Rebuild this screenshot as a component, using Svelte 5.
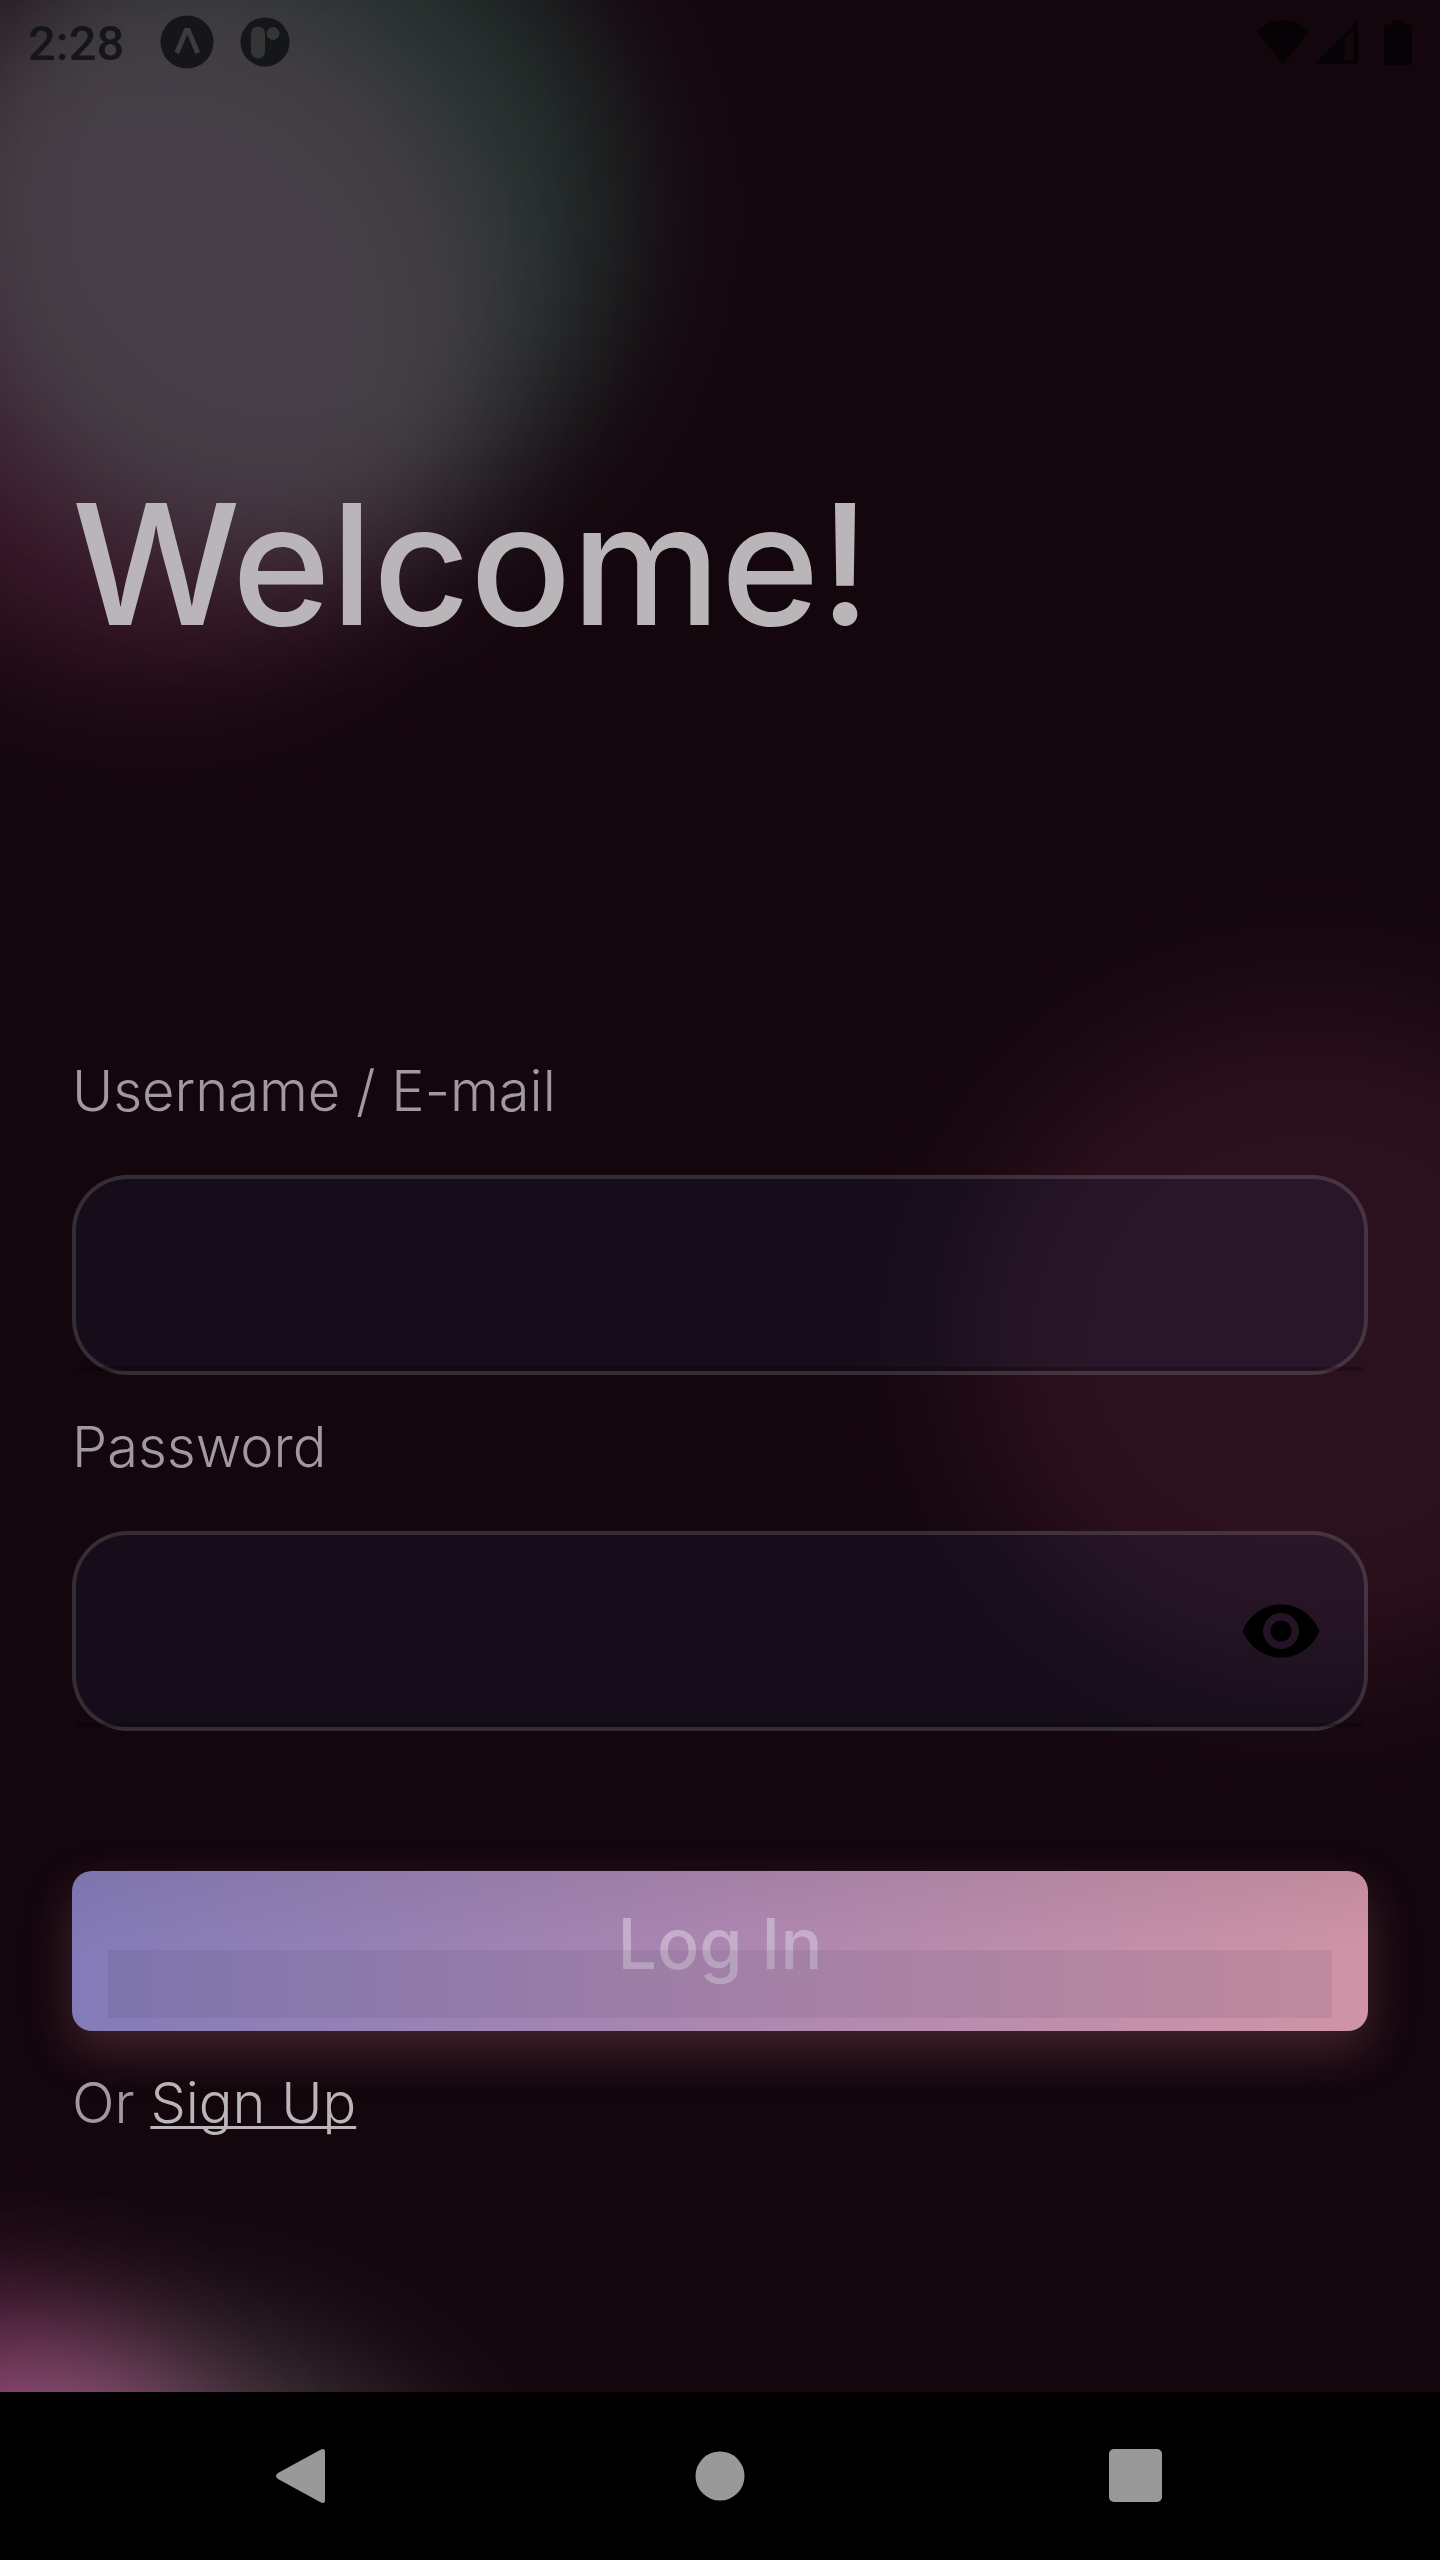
<script>
  let username = $state('');
  let password = $state('');
  let visible = $state(false);
</script>

<main class="screen">
  <div class="backdrop" aria-hidden="true">
    <div class="glow mint"></div>
    <div class="glow rose"></div>
    <div class="glow wine"></div>
    <div class="glow pearl"></div>
    <div class="glow magenta"></div>
  </div>

  <header class="status">
    <div class="group">
      <time>2:28</time>
      <svg class="app" viewBox="0 0 54 54" aria-hidden="true">
        <circle cx="27" cy="27" r="26.5" fill="#151617" />
        <path d="M14.500 37 24.500 13h5.500L40 37l-4.500 2-8.200-19.500L19 39z" fill="#3b3b40" />
      </svg>
      <svg class="app" viewBox="0 0 54 54" aria-hidden="true">
        <circle cx="27" cy="27" r="24.500" fill="#151617" />
        <rect x="13" y="11.500" width="14" height="32" rx="7" fill="#333537" />
        <circle cx="35" cy="18.500" r="6.500" fill="#333537" />
      </svg>
    </div>
    <div class="group icons">
      <svg class="wifi" viewBox="0 0 54 46" aria-hidden="true">
        <path d="M27 45 1 13Q12 1 27 1t26 12z" />
      </svg>
      <svg class="signal" viewBox="0 0 44 46" aria-hidden="true">
        <path fill-rule="evenodd" d="M0 45 44 1v44zM30.500 20.500v20.500h9V12z" />
      </svg>
      <svg class="battery" viewBox="0 0 28 46" aria-hidden="true">
        <path d="M8.500 1h11v4.500H25a3 3 0 0 1 3 3V43a3 3 0 0 1-3 3H3a3 3 0 0 1-3-3V8.500a3 3 0 0 1 3-3h5.500z" />
      </svg>
    </div>
  </header>

  <section class="content">
    <h1>Welcome!</h1>
    <form onsubmit={(e) => e.preventDefault()}>
      <label for="username">Username / E-mail</label>
      <div class="field">
        <input id="username" type="text" bind:value={username} />
      </div>
      <label for="password">Password</label>
      <div class="field">
        <input id="password" type={visible ? 'text' : 'password'} bind:value={password} />
        <button class="eye" type="button" aria-label="Show password" onclick={() => (visible = !visible)}>
          <svg viewBox="0 0 78 54" aria-hidden="true">
            <path fill-rule="evenodd" d="M39 0.500C21.500 0.500 7 11.500.5 27 7 42.500 21.500 53.500 39 53.500S71 42.500 77.500 27C71 11.500 56.500.5 39 .5zM39 45a18 18 0 1 1 0-36 18 18 0 0 1 0 36z" />
            <circle cx="39" cy="27" r="10.500" />
          </svg>
        </button>
      </div>
      <button class="login" type="submit">Log In</button>
    </form>
    <p>Or <a href="#signup">Sign Up</a></p>
  </section>

  <nav aria-label="System">
    <button type="button" aria-label="Back">
      <svg viewBox="0 0 56 56"><path d="M45 1.500Q49 0 49 4v48q0 4-4 2.500L2 31q-4-3 0-6z" /></svg>
    </button>
    <button type="button" aria-label="Home">
      <svg viewBox="0 0 56 56"><circle cx="28" cy="28" r="24.500" /></svg>
    </button>
    <button type="button" aria-label="Recent apps">
      <svg viewBox="0 0 56 56"><rect x="1" y="1" width="53" height="53" rx="5" /></svg>
    </button>
  </nav>
</main>

<style>
  :global(body) {
    margin: 0;
    background: #14060d;
  }
  .screen {
    position: relative;
    display: flex;
    flex-direction: column;
    min-height: 100vh;
    overflow: hidden;
    box-sizing: border-box;
    background: #14060d;
    color: #a09a9f;
    font-family: Inter, "Open Sans", sans-serif;
  }
  .backdrop {
    position: absolute;
    inset: 0;
    isolation: isolate;
    overflow: hidden;
    background: #14060d;
  }
  .glow {
    position: absolute;
    border-radius: 50%;
    filter: blur(68px);
    mix-blend-mode: plus-lighter;
  }
  .mint {
    left: -70px;
    top: -140px;
    width: 700px;
    height: 700px;
    background: #0f2a20;
  }
  .rose {
    left: -190px;
    top: -30px;
    width: 690px;
    height: 710px;
    background: #230f1a;
  }
  .wine {
    right: -220px;
    top: 1000px;
    width: 700px;
    height: 680px;
    background: #170a10;
  }
  .pearl {
    left: -160px;
    bottom: -250px;
    width: 620px;
    height: 480px;
    background: #2c302e;
  }
  .magenta {
    left: -300px;
    bottom: -190px;
    width: 520px;
    height: 450px;
    background: #562042;
  }
  .status,
  .content,
  nav {
    position: relative;
  }
  .status {
    display: flex;
    justify-content: space-between;
    align-items: center;
    height: 84px;
    padding: 0 28px;
  }
  .group {
    display: flex;
    align-items: center;
    gap: 24px;
  }
  time {
    margin-right: 12px;
    padding-top: 4px;
    color: #151617;
    font: 500 49px/56px Roboto, sans-serif;
  }
  .app {
    width: 54px;
    height: 54px;
  }
  .icons {
    gap: 4px;
    fill: #070205;
  }
  .wifi {
    width: 54px;
    height: 46px;
  }
  .signal {
    width: 44px;
    height: 46px;
  }
  .battery {
    width: 28px;
    height: 46px;
    margin-left: 22px;
  }
  .content {
    flex: 1;
    padding: 376px 72px 0;
  }
  h1 {
    margin: 0 0 387px;
    color: #bab5b8;
    font-size: 168px;
    font-weight: 500;
    line-height: 208px;
  }
  label {
    display: block;
    margin-bottom: 48px;
    font-size: 56px;
    font-weight: 300;
    line-height: 72px;
  }
  .field {
    position: relative;
    display: flex;
    align-items: center;
    box-sizing: border-box;
    height: 200px;
    margin-bottom: 36px;
    border: 4px solid #9ca0ac40;
    border-radius: 56px;
    background: rgb(36 64 125 / 0.12);
    background-clip: padding-box;
  }
  .field::after {
    content: "";
    position: absolute;
    left: 0;
    right: 0;
    bottom: 0;
    height: 4px;
    background: rgb(0 0 0 / 0.25);
  }
  input {
    flex: 1;
    min-width: 0;
    height: 100%;
    box-sizing: border-box;
    padding: 0 40px;
    border: 0;
    outline: 0;
    background: none;
    color: #bab5b8;
    font: 300 56px/72px Inter, sans-serif;
  }
  .eye {
    display: flex;
    margin-right: 44px;
    padding: 0;
    border: 0;
    background: none;
  }
  .eye svg {
    width: 78px;
    height: 54px;
  }
  .login {
    position: relative;
    display: block;
    width: 100%;
    height: 160px;
    margin-top: 140px;
    padding: 0 0 14px;
    border: 0;
    border-radius: 20px;
    background:
      linear-gradient(rgb(70 60 70 / 0.1), transparent 50%),
      linear-gradient(90deg, #837bb9, #ad87b1 50%, #d094a6);
    box-shadow: 0 20px 48px rgb(205 120 140 / 0.26);
    color: #c5aec9;
    font: 500 70px/100px Inter, sans-serif;
  }
  .login::after {
    content: "";
    position: absolute;
    inset: 79px 36px 13px;
    background: rgb(60 60 75 / 0.1);
  }
  p {
    margin: 36px 0 0;
    font-size: 56px;
    font-weight: 300;
    line-height: 72px;
  }
  a {
    color: #bab5b8;
    text-decoration: underline;
    text-decoration-thickness: 3px;
    text-decoration-skip-ink: none;
    text-underline-offset: 3px;
  }
  nav {
    display: flex;
    justify-content: center;
    align-items: center;
    gap: 25%;
    height: 168px;
    background: #000;
  }
  nav button {
    display: flex;
    padding: 0;
    border: 0;
    background: none;
  }
  nav svg {
    width: 56px;
    height: 56px;
    fill: #999;
  }
</style>
